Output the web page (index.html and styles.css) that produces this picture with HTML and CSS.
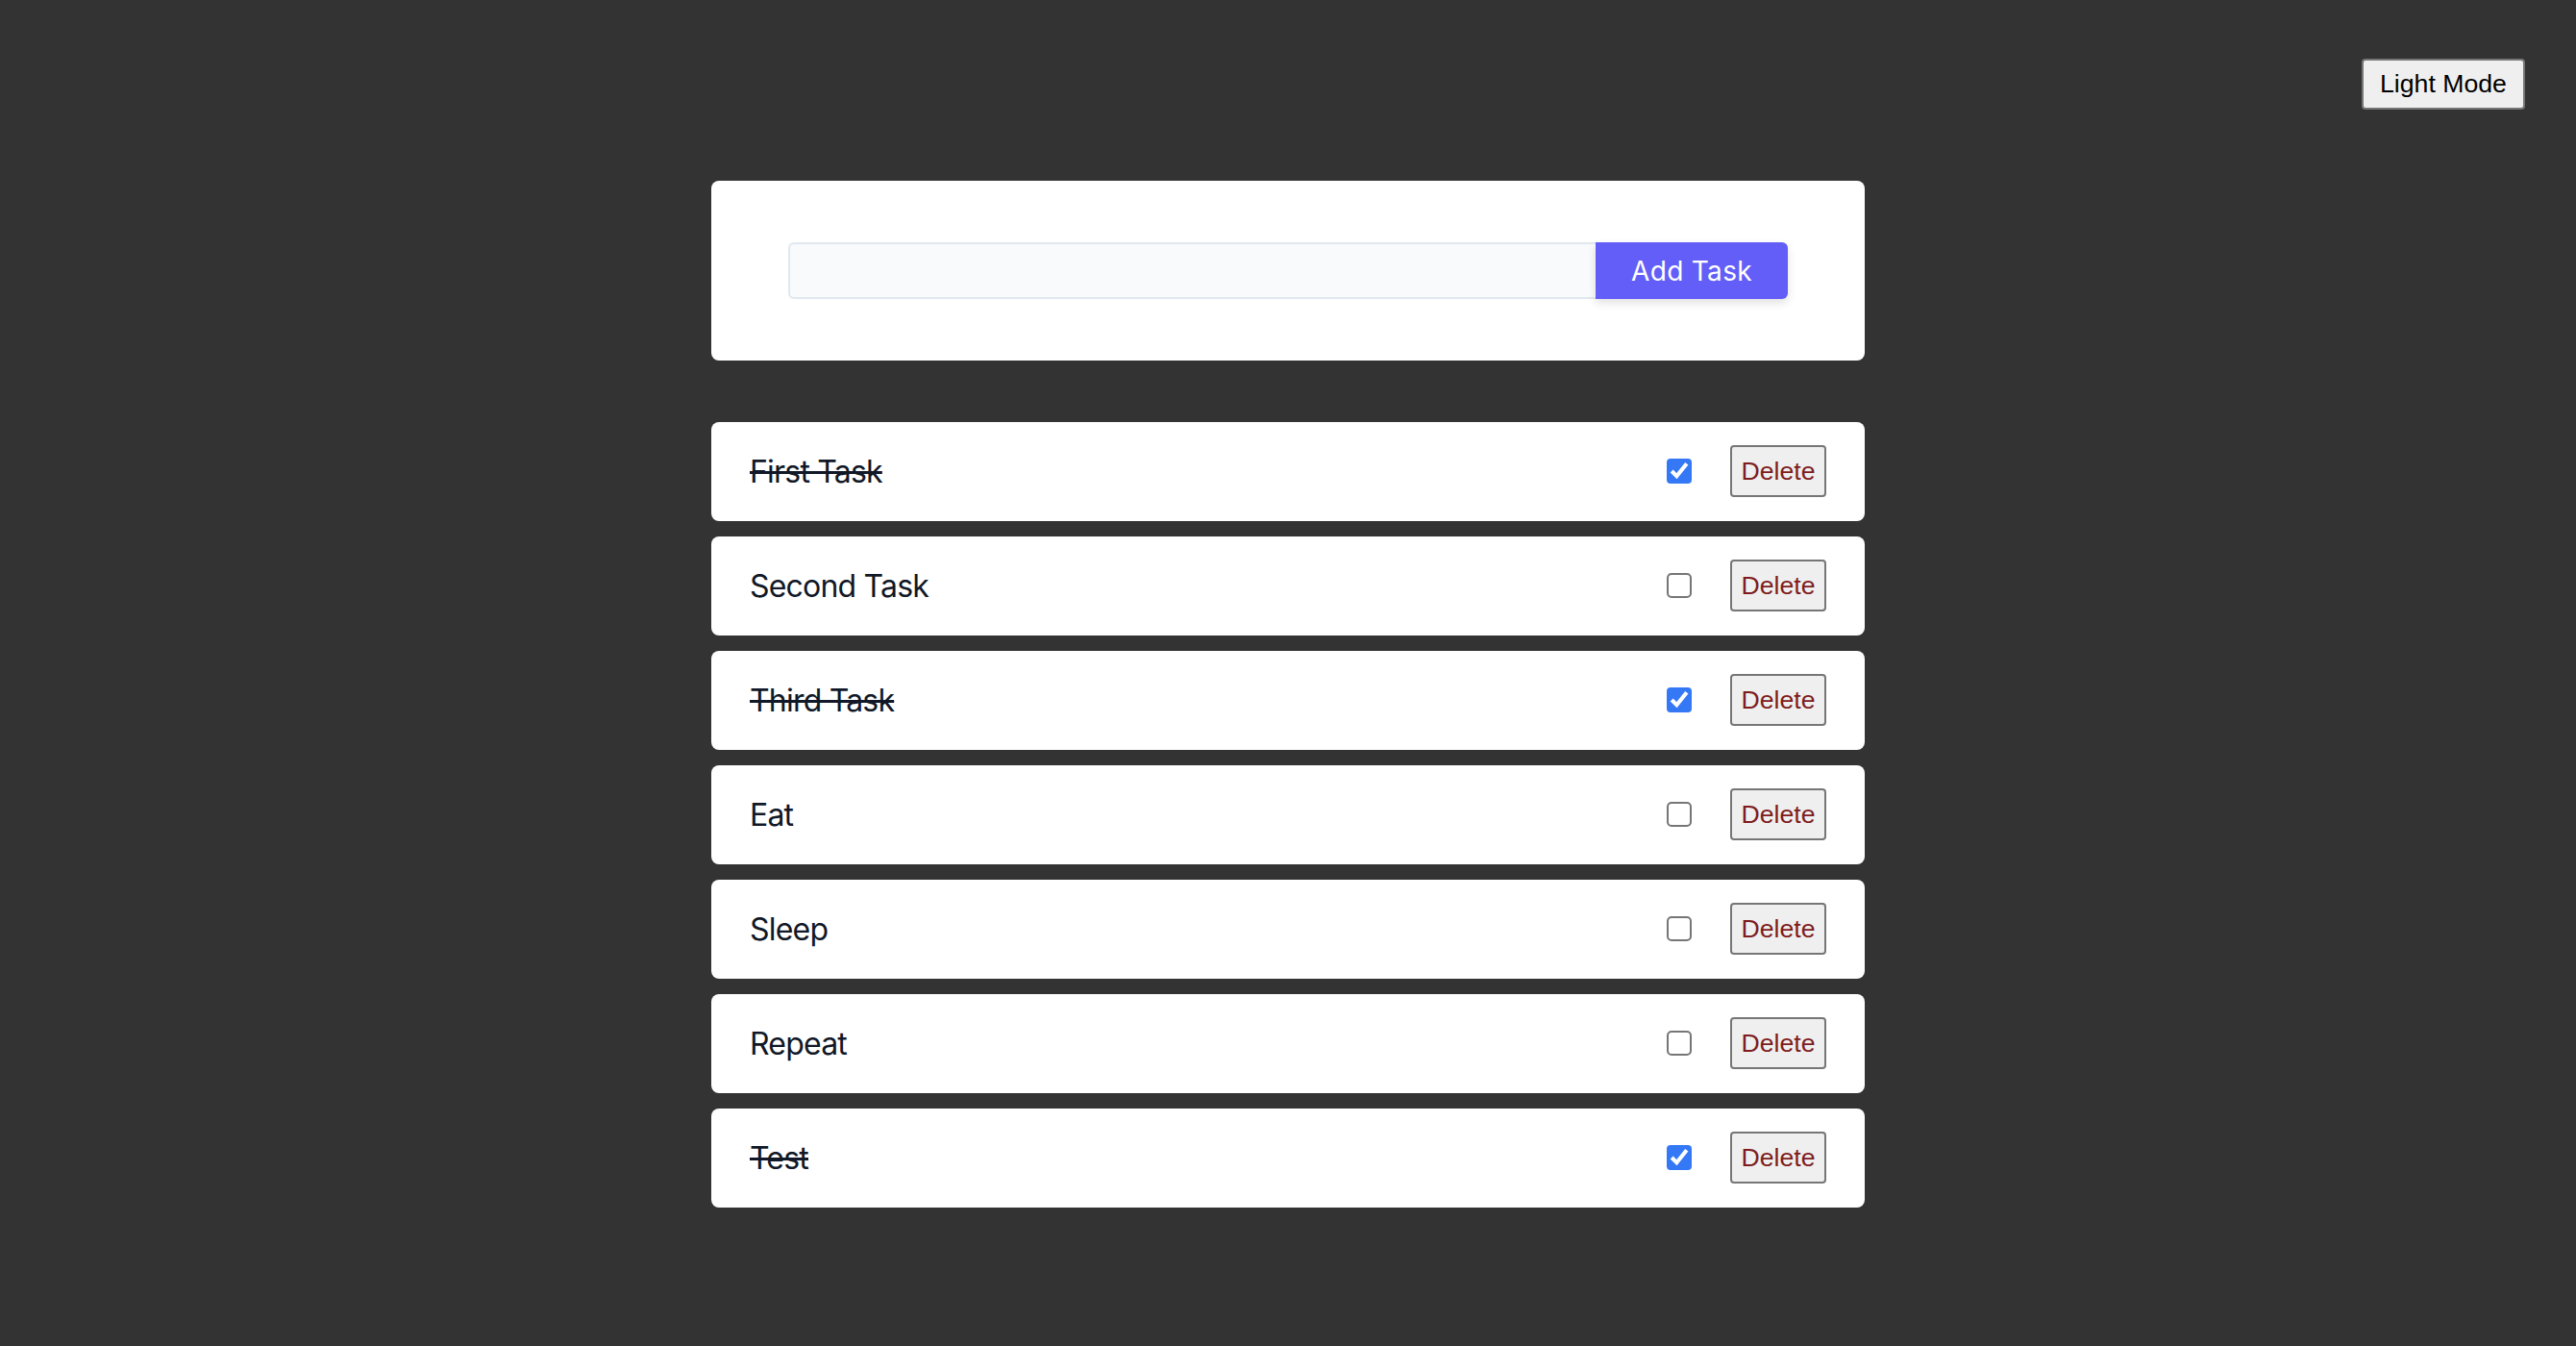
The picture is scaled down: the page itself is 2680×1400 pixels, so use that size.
FILE: index.html
```html
<!DOCTYPE html>
<html lang="en">
<head>
<meta charset="utf-8">
<title>Todo</title>
<link rel="stylesheet" href="styles.css">
</head>
<body>
<button class="mode-toggle" type="button">Light Mode</button>
<main class="app">
  <section class="card form-card">
    <form class="task-form">
      <input class="task-input" type="text" aria-label="New task">
      <button class="add-btn" type="button">Add Task</button>
    </form>
  </section>
  <ul class="task-list">
    <li class="card task done"><span class="task-text">First Task</span><input class="task-check" type="checkbox" checked><button class="delete-btn" type="button">Delete</button></li>
    <li class="card task"><span class="task-text">Second Task</span><input class="task-check" type="checkbox"><button class="delete-btn" type="button">Delete</button></li>
    <li class="card task done"><span class="task-text">Third Task</span><input class="task-check" type="checkbox" checked><button class="delete-btn" type="button">Delete</button></li>
    <li class="card task"><span class="task-text">Eat</span><input class="task-check" type="checkbox"><button class="delete-btn" type="button">Delete</button></li>
    <li class="card task"><span class="task-text">Sleep</span><input class="task-check" type="checkbox"><button class="delete-btn" type="button">Delete</button></li>
    <li class="card task"><span class="task-text">Repeat</span><input class="task-check" type="checkbox"><button class="delete-btn" type="button">Delete</button></li>
    <li class="card task done"><span class="task-text">Test</span><input class="task-check" type="checkbox" checked><button class="delete-btn" type="button">Delete</button></li>
  </ul>
</main>
</body>
</html>
```

FILE: styles.css
```css
html {
  zoom: 2;
}

body {
  margin: 0;
  min-height: 700px;
  background: #333333;
  font-family: Inter, "Noto Sans", sans-serif;
  position: relative;
}

.mode-toggle {
  position: absolute;
  top: 30.5px;
  right: 26.5px;
  width: 85px;
  height: 26.5px;
  padding: 0;
  font-family: "Liberation Sans", Arial, sans-serif;
  font-size: 13.333px;
  color: #000;
  background: #efefef;
  border: 1px solid #767676;
  border-radius: 2px;
}

.app {
  width: 600px;
  margin: 0 auto;
  padding-top: 94px;
}

.card {
  background: #ffffff;
  border-radius: 4px;
}

.form-card {
  padding: 32px 40px;
}

.task-form {
  display: flex;
  margin: 0;
}

.task-input {
  flex: 1;
  height: 29.5px;
  box-sizing: border-box;
  margin: 0;
  padding: 0 10px;
  background: #f8fafc;
  border: 1px solid #e2e8f0;
  border-right: none;
  border-radius: 3px 0 0 3px;
  font-family: Inter, sans-serif;
  font-size: 14px;
  outline: none;
}

.add-btn {
  width: 100px;
  height: 29.5px;
  margin: 0;
  padding: 0;
  background: #635ef7;
  color: #ffffff;
  border: none;
  border-radius: 0 3px 3px 0;
  font-family: Inter, sans-serif;
  font-size: 14px;
  letter-spacing: 0.15px;
  box-shadow: 0 2px 5px rgba(0, 0, 0, 0.12);
}

.task-list {
  list-style: none;
  margin: 32px 0 0;
  padding: 0;
  display: flex;
  flex-direction: column;
  gap: 8.1px;
}

.task {
  display: flex;
  align-items: center;
  height: 51.4px;
  box-sizing: border-box;
  padding: 0 20px;
}

.task-text {
  flex: 1;
  font-size: 16px;
  letter-spacing: -0.4px;
  color: #111827;
}

.done .task-text {
  text-decoration: line-through;
}

.task-check {
  width: 13px;
  height: 13px;
  margin: 0;
  accent-color: #3478f6;
}

.delete-btn {
  width: 50px;
  height: 27px;
  margin-left: 20px;
  padding: 0;
  font-family: "Liberation Sans", Arial, sans-serif;
  font-size: 13.333px;
  color: #7f1d1d;
  background: #efefef;
  border: 1px solid #767676;
  border-radius: 2px;
}
```
